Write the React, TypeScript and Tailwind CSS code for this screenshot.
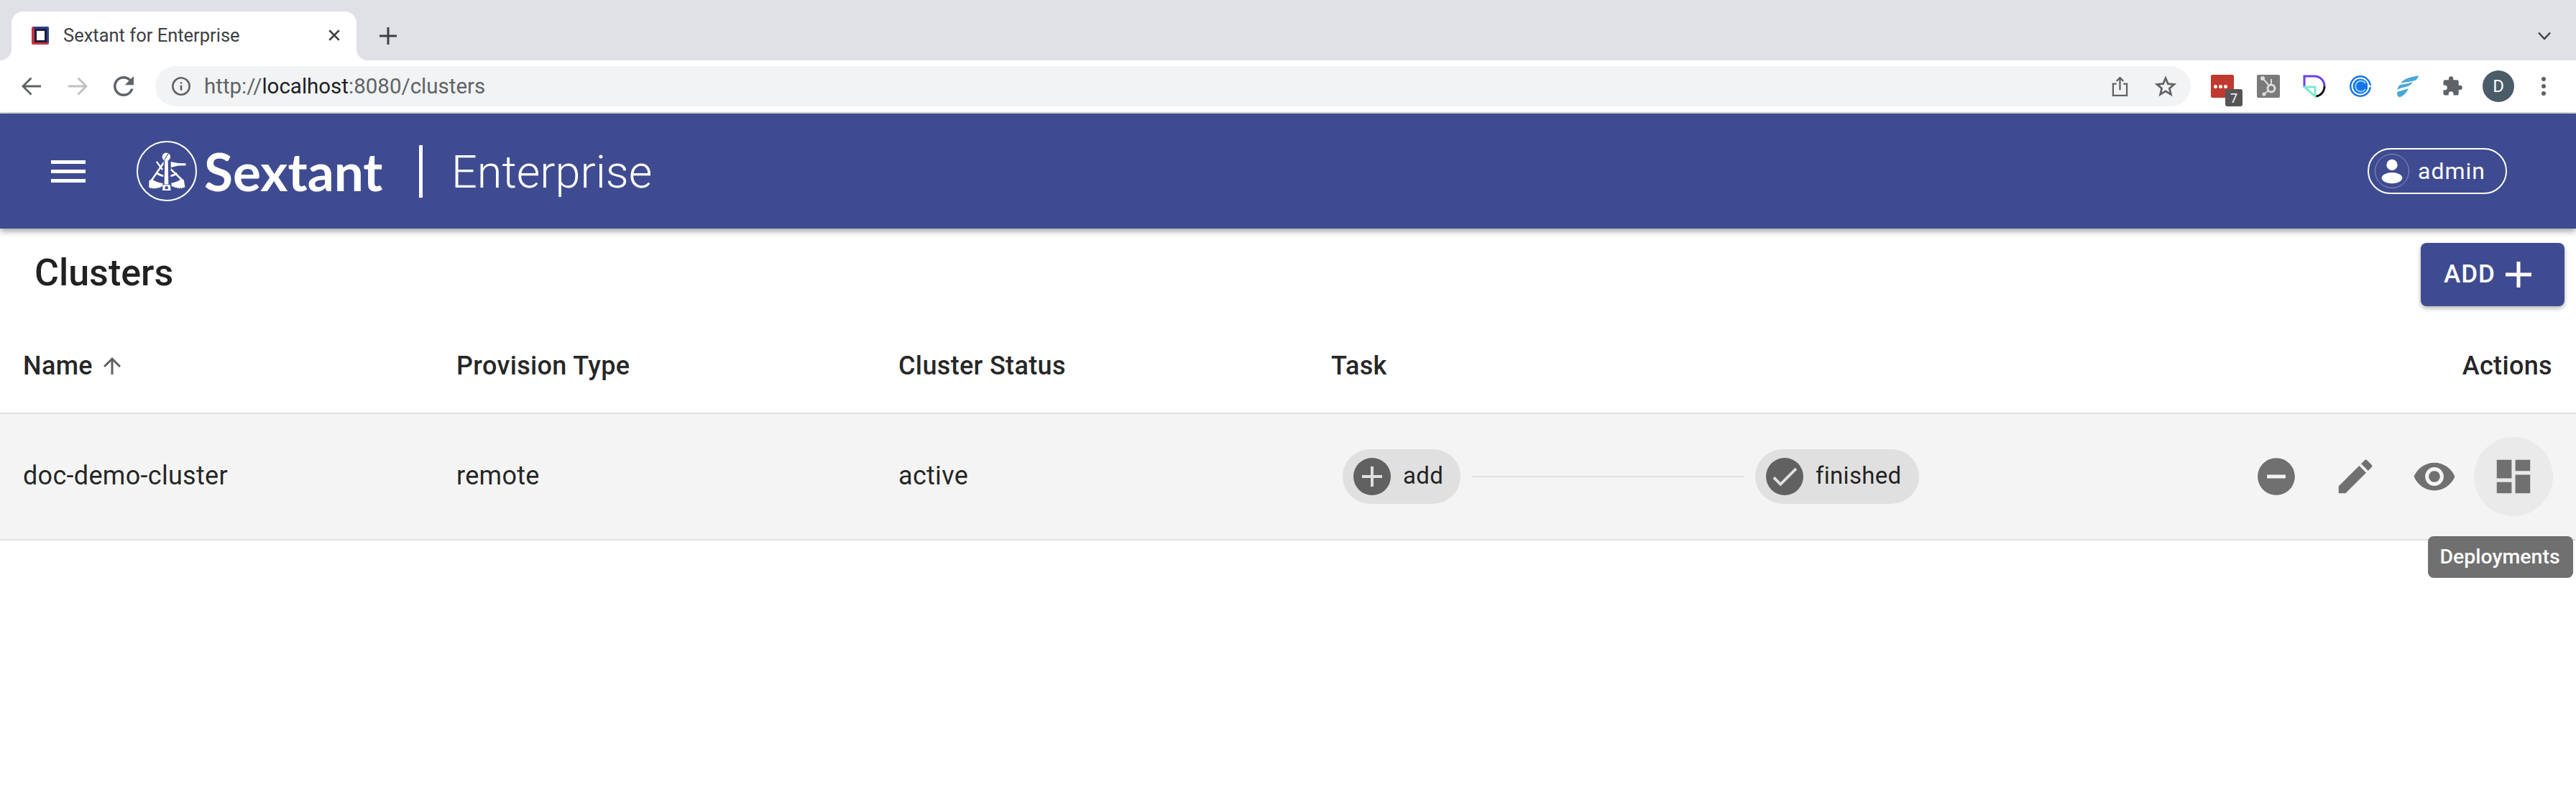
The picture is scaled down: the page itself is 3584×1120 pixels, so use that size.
import React from 'react';

const columns = 'grid grid-cols-[635px_615px_602px_1fr_auto] items-center';

function MuiIcon({ d, className }: { d: string; className: string }) {
  return (
    <svg viewBox="0 0 24 24" className={className} fill="currentColor">
      <path d={d} />
    </svg>
  );
}

function Favicon() {
  return (
    <svg viewBox="0 0 24 25" className="w-[24px] h-[25px]">
      <rect x="0" y="0" width="24" height="25" rx="2" fill="#c8323f" />
      <path d="M3 0h19a2 2 0 0 1 2 2v20h-3V3H3z" fill="#2f3f8f" />
      <rect x="4" y="3" width="17" height="19" fill="#1b1f3f" />
      <rect x="7" y="6" width="11" height="13" fill="#fff" />
    </svg>
  );
}

function SextantLogo() {
  return (
    <svg viewBox="90 48 250 250" className="w-[84px] h-[84px] shrink-0" fill="#fff" stroke="none">
      <circle cx="215" cy="173" r="122" fill="none" stroke="#fff" strokeWidth="6" />
      <circle cx="213" cy="114" r="17" />
      <path d="M205 126 L221 102" stroke="#3f4b91" strokeWidth="3" />
      <path d="M207 130h13l2 98h-17z" />
      <path d="M200 230h29l3 23h-35z" />
      <path d="M208 236h12v12h-12z" fill="#3f4b91" />
      <path d="M232 134l30 6 32 1v9l-32 1-30 7z" />
      <path d="M170 136l6-4 24 33-5 5z" />
      <path d="M202 132L150 208l6 4 46-66z" />
      <path d="M232 160l54 52-6 5-48-46z" />
      <path d="M142 213l10-7c14 10 30 16 47 18l-1 14-8-1-1 5-6-2 0 4-7-3-1 5-6-3-2 4-6-4-3 4-6-5-3 3-5-5-3 3z" />
      <path d="M286 211l-9-6c-12 9-27 15-43 18l1 14 8-1 1 5 6-2 1 4 6-3 2 5 6-3 2 4 6-4 3 4 5-5 3 3 4-5 3 3z" />
      <path d="M177 178c8 6 15 9 24 11v8c-11-2-20-6-29-12z" />
      <path d="M231 189c9-2 17-5 24-10l5 6c-8 6-18 10-29 12z" />
    </svg>
  );
}

function BrowserChrome() {
  return (
    <div className="font-['Roboto',sans-serif]">
      <div className="h-[84px] bg-[#dfe1e5] flex items-end">
        <div className="relative ml-[16px] w-[480px] h-[68px] bg-white rounded-t-[16px] flex items-center pl-[28px] pr-[22px] pb-[2px]">
          <svg viewBox="0 0 16 16" className="absolute left-[-16px] bottom-0 w-[16px] h-[16px]">
            <path d="M16 0v16H0C9 16 16 9 16 0z" fill="#fff" />
          </svg>
          <svg viewBox="0 0 16 16" className="absolute right-[-16px] bottom-0 w-[16px] h-[16px]">
            <path d="M0 0v16h16C7 16 0 9 0 0z" fill="#fff" />
          </svg>
          <Favicon />
          <span className="ml-[20px] text-[25.5px] text-[#3c4043] whitespace-nowrap flex-1">Sextant for Enterprise</span>
          <svg viewBox="0 0 16 16" className="w-[18px] h-[18px]" stroke="#3c4043" strokeWidth="2.2" fill="none">
            <path d="M2 2l12 12M14 2L2 14" />
          </svg>
        </div>
        <svg viewBox="0 0 24 24" className="ml-[32px] mb-[22px] w-[24px] h-[24px]" stroke="#3c4043" strokeWidth="3" fill="none">
          <path d="M12 0v24M0 12h24" />
        </svg>
        <div className="flex-1" />
        <svg viewBox="0 0 18 12" className="mr-[35px] mb-[28px] w-[18px] h-[12px]" stroke="#3c4043" strokeWidth="2.4" fill="none">
          <path d="M1 1.5l8 8.5 8-8.5" />
        </svg>
      </div>
      <div className="h-[74px] bg-white border-b-2 border-[#d9d9d9] flex items-start pt-[8px] text-[#5f6368]">
        <svg viewBox="0 0 28 26" className="ml-[30px] mt-[15px] w-[27px] h-[26px]" stroke="#5f6368" strokeWidth="3" fill="none">
          <path d="M28 13H3M14 1L2 13l12 12" />
        </svg>
        <svg viewBox="0 0 28 26" className="ml-[38px] mt-[15px] w-[27px] h-[26px]" stroke="#bdc1c6" strokeWidth="3" fill="none">
          <path d="M0 13h25M14 1l12 12-12 12" />
        </svg>
        <svg viewBox="0 0 24 24" className="ml-[29px] mt-[7px] w-[42px] h-[42px]" fill="#5f6368">
          <path d="M17.65 6.35A7.958 7.958 0 0 0 12 4c-4.42 0-7.99 3.58-7.99 8s3.57 8 7.99 8c3.73 0 6.84-2.55 7.73-6h-2.08A5.99 5.99 0 0 1 12 18c-3.31 0-6-2.69-6-6s2.69-6 6-6c1.66 0 3.14.69 4.22 1.78L13 11h7V4l-2.35 2.35z" />
        </svg>
        <div className="ml-[23px] grow h-[56px] bg-[#f1f3f4] rounded-full flex items-center pl-[22px] pr-[20px]">
          <svg viewBox="0 0 24 24" className="w-[28px] h-[28px]" fill="none" stroke="#5f6368" strokeWidth="2.2">
            <circle cx="12" cy="12" r="10" />
            <path d="M12 11v6M12 7v2" />
          </svg>
          <span className="ml-[18px] text-[29.5px] text-[#5f6368] flex-1">
            http://<span className="text-[#202124]">localhost</span>:8080/clusters
          </span>
          <svg viewBox="0 0 24 30" className="w-[23px] h-[29px]" fill="none" stroke="#5f6368" strokeWidth="2.4">
            <path d="M7 11H2v17h20V11h-5M12 20V2M7 7l5-5 5 5" />
          </svg>
          <svg viewBox="0 0 24 24" className="ml-[37px] w-[30px] h-[30px]" fill="none" stroke="#5f6368" strokeWidth="2.2">
            <path d="M12 3l2.7 6.3 6.8.6-5.2 4.5 1.6 6.7L12 17.5l-5.9 3.6 1.6-6.7-5.2-4.5 6.8-.6z" />
          </svg>
        </div>
        <div className="flex items-start ml-[28px] mr-[42px] shrink-0">
          <div className="relative mt-[12px] w-[32px] h-[32px] bg-[#c0392f] rounded-[2px] flex items-center justify-center gap-[2px] pr-[6px]">
            <span className="w-[5px] h-[5px] rounded-full bg-white" />
            <span className="w-[5px] h-[5px] rounded-full bg-white" />
            <span className="w-[5px] h-[5px] rounded-full bg-white" />
            <span className="absolute left-[20px] top-[20px] w-[24px] h-[24px] rounded-[3px] bg-[#555] text-white text-[18px] flex items-center justify-center">7</span>
          </div>
          <div className="ml-[32px] mt-[12px] w-[32px] h-[32px] bg-[#7a7a7a] rounded-[2px] flex items-center justify-center">
            <svg viewBox="0 0 32 32" className="w-[32px] h-[32px]" fill="none" stroke="#ddd" strokeWidth="2">
              <circle cx="20" cy="19" r="5" strokeWidth="3" />
              <path d="M9 6l8 9M20 6v8M11 26l5-4" />
              <circle cx="8" cy="5" r="2" fill="#ddd" />
              <circle cx="10" cy="27" r="1.5" fill="#ddd" />
            </svg>
          </div>
          <svg viewBox="0 0 32 32" className="ml-[32px] mt-[12px] w-[32px] h-[32px]" fill="none" strokeWidth="3">
            <path d="M2 16V2h14c8 0 14 6 14 14" stroke="#6b3ff0" />
            <path d="M30 16c0 8-6 14-13 14" stroke="#111" />
            <path d="M2 17h15v13z" stroke="#7ee8cf" />
          </svg>
          <svg viewBox="0 0 32 32" className="ml-[32px] mt-[12px] w-[32px] h-[32px]" fill="none">
            <circle cx="16" cy="16" r="15" fill="#1a73e8" />
            <circle cx="16" cy="16" r="12.5" fill="#fff" />
            <circle cx="16" cy="16" r="10.5" fill="#1a73e8" />
            <path d="M23 12a7.5 7.5 0 1 0 0 8" stroke="#7fdcff" strokeWidth="2" />
            <path d="M26 13l6 3-6 3z" fill="#fff" />
          </svg>
          <svg viewBox="0 0 32 32" className="ml-[33px] mt-[12px] w-[32px] h-[32px]" fill="#4aa8d8">
            <path d="M32 1C24 3 12 4 7 12c6-2 14-2 20-4 3-1 4-4 5-7z" />
            <path d="M6 14c6-1 13-2 18-4-2 4-6 6-10 7-5 1-9 2-12 4 1-3 2-5 4-7z" />
            <path d="M2 24c5-2 11-3 16-5-3 6-7 11-12 12-3 0-4-2-4-7z" />
          </svg>
          <svg viewBox="0 0 24 24" className="ml-[32px] mt-[13px] w-[30px] h-[30px]" fill="#5f6368">
            <path d="M20.5 11H19V7a2 2 0 0 0-2-2h-4V3.5a2.5 2.5 0 0 0-5 0V5H4a2 2 0 0 0-2 2v3.8h1.5a2.7 2.7 0 0 1 0 5.4H2V20a2 2 0 0 0 2 2h3.8v-1.5a2.7 2.7 0 0 1 5.4 0V22H17a2 2 0 0 0 2-2v-4h1.5a2.5 2.5 0 0 0 0-5z" />
          </svg>
          <div className="ml-[27px] mt-[6px] w-[44px] h-[44px] rounded-full bg-[#4a5c68] text-white text-[24px] flex items-center justify-center">D</div>
          <div className="ml-[38px] mt-[15px] flex flex-col gap-[4px]">
            <span className="w-[6px] h-[6px] rounded-full bg-[#5f6368]" />
            <span className="w-[6px] h-[6px] rounded-full bg-[#5f6368]" />
            <span className="w-[6px] h-[6px] rounded-full bg-[#5f6368]" />
          </div>
        </div>
      </div>
    </div>
  );
}

function AppHeader() {
  return (
    <header className="relative h-[160px] bg-[#3f4b91] text-white flex items-center pl-[71px] pr-[96px] shadow-[0_4px_8px_rgba(0,0,0,0.35)]">
      <div className="flex flex-col gap-[8px] w-[48px]">
        <span className="h-[5px] bg-white" />
        <span className="h-[5px] bg-white" />
        <span className="h-[5px] bg-white" />
      </div>
      <div className="ml-[71px]">
        <SextantLogo />
      </div>
      <span className="ml-[10px] text-[73px] font-bold font-['Lato',sans-serif] leading-none w-[299px]">Sextant</span>
      <span className="w-[5px] h-[73px] bg-white" />
      <span className="ml-[40px] pt-[2px] text-[63px] font-light leading-none flex-1">Enterprise</span>
      <div className="w-[194px] h-[64px] rounded-full border-2 border-white flex items-center pl-[8px]">
        <div className="w-[48px] h-[48px] rounded-full border border-[#8a92c0] flex items-center justify-center">
          <svg viewBox="0 0 48 48" className="w-[46px] h-[46px]" fill="#fff">
            <circle cx="24" cy="15" r="8" />
            <ellipse cx="24" cy="34" rx="15" ry="8" />
          </svg>
        </div>
        <span className="ml-[12px] text-[32px] tracking-[1px]">admin</span>
      </div>
    </header>
  );
}

function Chip({ label, width, children }: { label: string; width: string; children: React.ReactNode }) {
  return (
    <div className={`${width} h-[76px] rounded-full bg-[#e0e0e0] flex items-center pl-[15px] shrink-0`}>
      <div className="w-[52px] h-[52px] rounded-full bg-[#616161] flex items-center justify-center text-[#e0e0e0]">{children}</div>
      <span className="ml-[17px] text-[33px] text-black/[.87] pb-[2px]">{label}</span>
    </div>
  );
}

export default function App() {
  return (
    <div className="min-h-screen bg-white font-['Roboto',sans-serif] text-black/[.87] overflow-hidden">
      <BrowserChrome />
      <AppHeader />

      <div className="h-[128px] flex items-start justify-between pr-[16px]">
        <h1 className="ml-[48px] mt-[32px] text-[52px] leading-[60px] font-medium">Clusters</h1>
        <button className="mt-[20px] w-[200px] h-[88px] rounded-[8px] bg-[#3f4b91] text-white text-[35px] font-medium tracking-[1px] flex items-center pl-[32px] gap-[14px] shadow-[0_3px_6px_rgba(0,0,0,0.3)]">
          ADD
          <svg viewBox="0 0 36 36" className="w-[36px] h-[36px]" fill="#fff">
            <path d="M15.5 0h5v15.500h15.500v5H20.500v15.500h-5V20.500H0v-5h15.500z" />
          </svg>
        </button>
      </div>

      <div className={`${columns} h-[130px] border-b-2 border-[#e0e0e0] text-[36px] font-medium tracking-[0.35px]`}>
        <div className="pl-[32px] flex items-center gap-[9px] pb-[2px]">
          Name
          <svg viewBox="0 0 24 24" className="w-[36px] h-[36px] text-[#616161]" fill="currentColor">
            <path d="M4 12l1.41 1.41L11 7.83V20h2V7.83l5.58 5.59L20 12l-8-8-8 8z" />
          </svg>
        </div>
        <div className="pb-[2px]">Provision Type</div>
        <div className="pb-[2px]">Cluster Status</div>
        <div className="pb-[2px]">Task</div>
        <div className="pr-[33px] pb-[2px]">Actions</div>
      </div>

      <div className={`${columns} relative h-[176px] bg-[#f4f4f4] border-b-2 border-[#e0e0e0] text-[36px] tracking-[0.3px]`}>
        <div className="pl-[32px] pb-[2px]">doc-demo-cluster</div>
        <div className="pb-[2px]">remote</div>
        <div className="pb-[2px]">active</div>
        <div className="pl-[16px] flex items-center">
          <Chip label="add" width="w-[164px]">
            <MuiIcon d="M19 13h-6v6h-2v-6H5v-2h6V5h2v6h6v2z" className="w-[48px] h-[48px]" />
          </Chip>
          <div className="mx-[16px] w-[378px] h-[2px] bg-[#e0e0e0]" />
          <Chip label="finished" width="w-[228px]">
            <MuiIcon d="M9 16.17L4.83 12l-1.42 1.41L9 19 21 7l-1.41-1.41z" className="w-[46px] h-[46px]" />
          </Chip>
        </div>
        <div className="pr-[32px] flex items-center text-[#707070]">
          <div className="w-[110px] h-[110px] flex items-center justify-center">
            <MuiIcon d="M12 2C6.48 2 2 6.48 2 12s4.48 10 10 10 10-4.48 10-10S17.52 2 12 2zm5 11H7v-2h10v2z" className="w-[62px] h-[62px]" />
          </div>
          <div className="w-[110px] h-[110px] flex items-center justify-center">
            <MuiIcon d="M3 17.25V21h3.75L17.81 9.94l-3.75-3.75L3 17.25zM20.71 7.04a.996.996 0 0 0 0-1.41l-2.34-2.34a.996.996 0 0 0-1.41 0l-1.83 1.83 3.75 3.75 1.83-1.83z" className="w-[62px] h-[62px]" />
          </div>
          <div className="w-[110px] h-[110px] flex items-center justify-center">
            <MuiIcon d="M12 4.5C7 4.5 2.73 7.61 1 12c1.73 4.39 6 7.5 11 7.5s9.27-3.11 11-7.5c-1.73-4.39-6-7.5-11-7.5zM12 17c-2.76 0-5-2.24-5-5s2.24-5 5-5 5 2.24 5 5-2.24 5-5 5zm0-8c-1.66 0-3 1.34-3 3s1.34 3 3 3 3-1.34 3-3-1.34-3-3-3z" className="w-[62px] h-[62px]" />
          </div>
          <div className="w-[110px] h-[110px] rounded-full bg-[#eaeaea] flex items-center justify-center">
            <MuiIcon d="M3 13h8V3H3v10zm0 8h8v-6H3v6zm10 0h8V11h-8v10zm0-18v6h8V3h-8z" className="w-[62px] h-[62px]" />
          </div>
        </div>
        <div className="absolute right-[4px] top-[170px] w-[202px] h-[58px] rounded-[8px] bg-[#707070] text-white text-[28.5px] tracking-normal font-medium flex items-center justify-center pr-[2px]">
          Deployments
        </div>
      </div>
    </div>
  );
}
